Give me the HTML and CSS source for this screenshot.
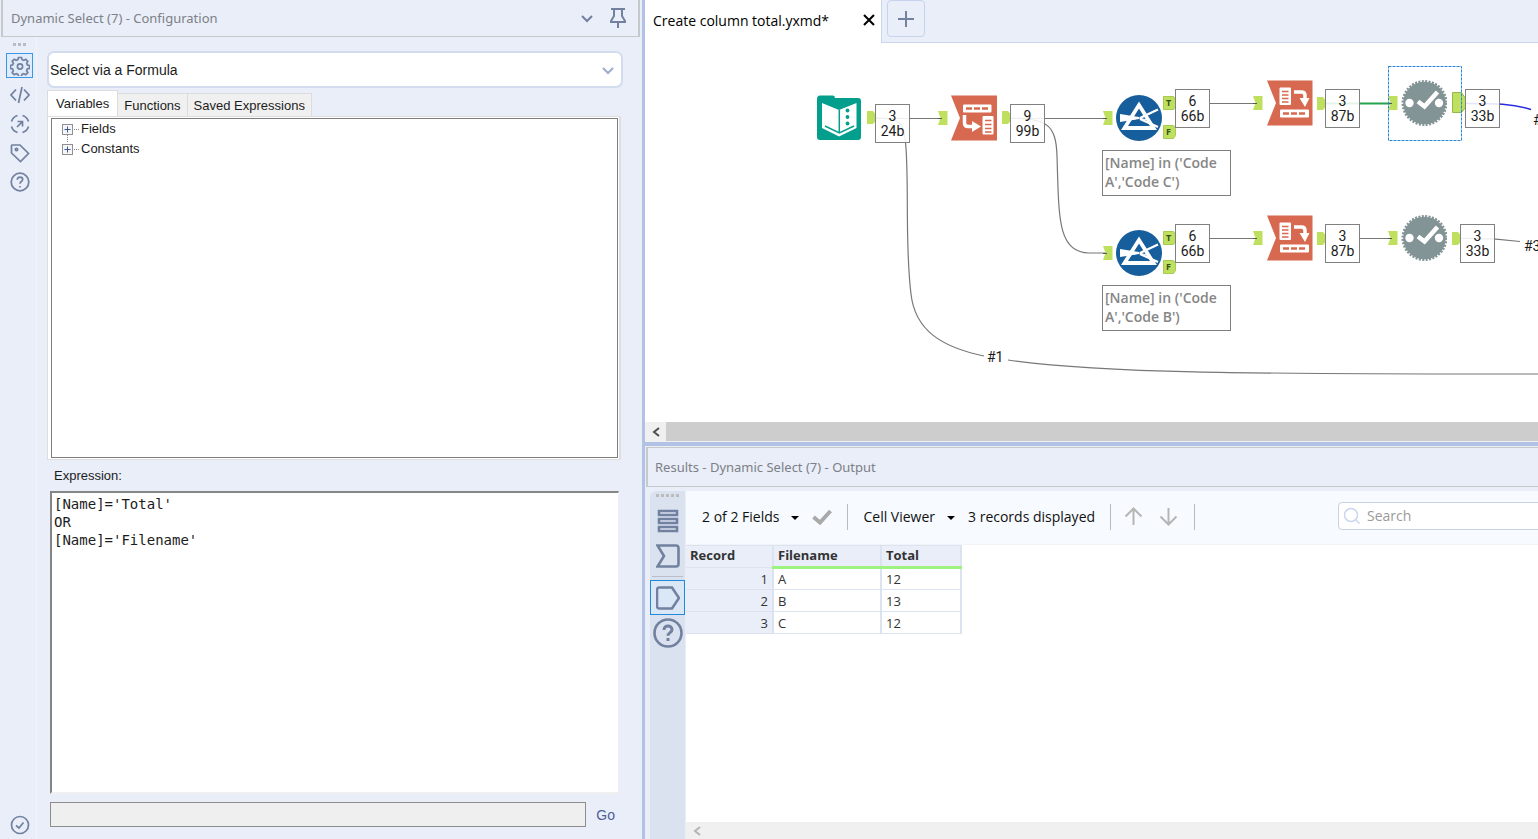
FILE: index.html
```html
<!DOCTYPE html>
<html lang="en">
<head>
<meta charset="utf-8">
<title>Create column total.yxmd</title>
<link rel="stylesheet" href="styles.css">
</head>
<body>
<div class="app">
  <section class="config">
    <header class="pane-head">
      <h2>Dynamic Select (7) - Configuration</h2>
      <button class="icon-btn" aria-label="Pane menu"><svg width="14" height="14" viewBox="0 0 14 14" class="line"><path d="M2 5l5 5 5-5"/></svg></button>
      <button class="icon-btn" aria-label="Pin pane"><svg width="18" height="22" viewBox="0 0 18 22" class="line"><path d="M2 2h14M5 2v7l-3 5v1h14v-1l-3-5V2M9 15v6"/></svg></button>
    </header>
    <div class="config-main">
      <nav class="rail">
        <span class="grip"><i></i><i></i><i></i></span>
        <button class="rail-btn on" aria-label="Configuration"><svg width="20" height="20" viewBox="0 0 20 20" class="line"><path d="M8.500 1.500h3l.6 2.200 1.700.7 2-1.100 2 2-1.100 2 .7 1.700 2.100.5v2.900l-2.200.6-.7 1.700 1.200 2-2.100 2-2-1.100-1.700.7-.6 2.200h-2.900l-.6-2.200-1.700-.7-2 1.100-2-2 1.100-2-.7-1.700-2.100-.6V9.500l2.200-.6.7-1.700-1.200-2 2-2 2 1.100 1.700-.7z"/><circle cx="10" cy="10.500" r="2.600"/></svg></button>
        <button class="rail-btn" aria-label="XML view"><svg width="20" height="20" viewBox="0 0 20 20" class="line"><path d="M6 4.500L1 10l5 5.500M14 4.500l5 5.500-5 5.500M12 2L8.500 18"/></svg></button>
        <button class="rail-btn" aria-label="Navigation"><svg width="20" height="20" viewBox="0 0 20 20" class="line"><path d="M12.500 1.500a9 9 0 0 1 6 6M18.500 12.500a9 9 0 0 1-6 6M7.500 18.500a9 9 0 0 1-6-6M1.500 7.500a9 9 0 0 1 6-6M7.500 7.500h5v5M12.500 7.500l-5.500 5.500"/></svg></button>
        <button class="rail-btn" aria-label="Annotation"><svg width="20" height="20" viewBox="0 0 20 20" class="line"><path d="M1.500 2.500v7.500l9 8.500 8-8-8.500-8.500h-8z"/><circle cx="6.500" cy="6.500" r="1.200"/></svg></button>
        <button class="rail-btn" aria-label="Help"><svg width="20" height="20" viewBox="0 0 20 20" class="line"><circle cx="10" cy="10" r="8.800"/><path d="M7.300 7.800c0-3.600 5.400-3.400 5.400-.2 0 2-2.700 1.900-2.700 4.100M10 14v1.400"/></svg></button>
        <button class="rail-btn last" aria-label="Status"><svg width="20" height="20" viewBox="0 0 20 20" class="line"><circle cx="10" cy="10" r="8.500"/><path d="M6 10.500l3 2.500 4.500-5.500"/></svg></button>
      </nav>
      <div class="form">
        <div class="combo">
          <select aria-label="Selection mode"><option>Select via a Formula</option></select>
          <svg width="12" height="12" viewBox="0 0 12 12" class="line pale"><path d="M1 4l5 5 5-5"/></svg>
        </div>
        <div class="tabs" role="tablist">
          <button class="tab on" role="tab" aria-selected="true">Variables</button>
          <button class="tab" role="tab">Functions</button>
          <button class="tab" role="tab">Saved Expressions</button>
        </div>
        <div class="tab-page">
          <ul class="tree">
            <li><svg width="20" height="20" viewBox="0 0 20 20"><use href="#plus"/><path class="dots" d="M6.500 16v4"/></svg>Fields</li>
            <li><svg width="20" height="20" viewBox="0 0 20 20"><use href="#plus"/><path class="dots" d="M6.500 0v4"/></svg>Constants</li>
          </ul>
        </div>
        <label class="expr-label" for="expr">Expression:</label>
        <textarea id="expr" class="expr" spellcheck="false">[Name]='Total'
OR
[Name]='Filename'</textarea>
        <div class="run"><input type="text" readonly aria-label="Expression result"><button>Go</button></div>
      </div>
    </div>
  </section>

  <main class="work">
    <section class="editor">
      <div class="docs">
        <div class="doc"><span>Create column total.yxmd*</span><button aria-label="Close tab"><svg width="12" height="12" viewBox="0 0 12 12"><path d="M1 1l10 10M11 1L1 11" stroke="#000" stroke-width="2"/></svg></button></div>
        <div class="docs-rest"><button class="new-doc" aria-label="New workflow"><svg width="16" height="16" viewBox="0 0 16 16" class="line"><path d="M8 0v16M0 8h16"/></svg></button></div>
      </div>
      <div class="canvas">
        <svg class="wires" aria-hidden="true">
          <g transform="translate(-645 -43)">
            <g class="wire">
              <path d="M875 118.500h66M1010 118.500h96M1209 103.500h47M1209 238.500h47M1359 238.500h33"/>
              <path d="M875 118c26 0 29 4 31 30 3 45-1 98 5 146 4 36 30 53 73 62M1008 360c90 13 230 14 530 14"/>
              <path d="M1010 118c37 1 46 6 47 38 2 60 0 97 32 97h18M1460 238.500c30-1 45 1 60 3"/>
            </g>
            <path class="wire green" d="M1325 103.500h67"/>
            <path class="wire blue" d="M1465 103.500c30 0 48 0 66 6"/>
            <use href="#out" x="867" y="110"/><use href="#out" x="1002" y="110"/>
            <use href="#out" x="1317" y="96"/><use href="#out" x="1317" y="231"/><use href="#out" x="1452" y="231"/>
            <use href="#in" x="938" y="111"/><use href="#in" x="1103" y="111"/><use href="#in" x="1103" y="246"/>
            <use href="#in" x="1253" y="96"/><use href="#in" x="1253" y="231"/><use href="#in" x="1388" y="96"/><use href="#in" x="1388" y="231"/>
            <use href="#tf" x="1163" y="96"/><use href="#tf" x="1163" y="125"/><use href="#tf" x="1163" y="231"/><use href="#tf" x="1163" y="260"/>
            <path d="M1452.500 92.500h9l4 6v9l-4 5h-9z" fill="#bfe05f" stroke="#93b84e"/>
            <g class="tf-text"><text x="1166" y="106">T</text><text x="1166" y="135">F</text><text x="1166" y="241">T</text><text x="1166" y="270">F</text></g>
            <rect class="picked" x="1388.500" y="66.500" width="73" height="74"/>
            <use href="#t-input" x="816" y="95" width="46" height="46"/>
            <use href="#t-transpose" x="951" y="95" width="46" height="46"/>
            <use href="#t-filter" x="1116" y="95" width="46" height="46"/><use href="#t-filter" x="1116" y="230" width="46" height="46"/>
            <use href="#t-crosstab" x="1267" y="80" width="46" height="46"/><use href="#t-crosstab" x="1267" y="215" width="46" height="46"/>
            <use href="#t-select" x="1401" y="80" width="46" height="46"/><use href="#t-select" x="1401" y="215" width="46" height="46"/>
          </g>
        </svg>
        <div class="count c1">3<br>24b</div>
        <div class="count c2">9<br>99b</div>
        <div class="count c3">6<br>66b</div>
        <div class="count c4">3<br>87b</div>
        <div class="count c5">3<br>33b</div>
        <div class="count c6">6<br>66b</div>
        <div class="count c7">3<br>87b</div>
        <div class="count c8">3<br>33b</div>
        <p class="note n1">[Name] in ('Code A','Code C')</p>
        <p class="note n2">[Name] in ('Code A','Code B')</p>
        <span class="tag g1">#1</span><span class="tag g2">#2</span><span class="tag g3">#3</span>
      </div>
      <div class="scroll"><button aria-label="Scroll left"><svg width="8" height="10" viewBox="0 0 8 10"><path d="M7 1L2 5l5 4" fill="none" stroke="#505050" stroke-width="2"/></svg></button><div class="thumb"></div></div>
    </section>

    <section class="results">
      <header class="pane-head"><h2>Results - Dynamic Select (7) - Output</h2></header>
      <div class="results-main">
        <nav class="side">
          <span class="grip"><i></i><i></i><i></i><i></i><i></i></span>
          <button class="side-btn" aria-label="Messages"><svg width="22" height="24" viewBox="0 0 22 24" class="line"><path d="M2 2h18v4H2zM2 10h18v4H2zM2 18h18v4H2z"/></svg></button>
          <button class="side-btn" aria-label="Input anchor"><svg width="24" height="24" viewBox="0 0 24 24" class="line"><path d="M1.500 1.500H20q2.500 0 2.500 2.500v16q0 2.500-2.500 2.500H1.500L8 12z"/></svg></button>
          <hr>
          <button class="side-btn on" aria-label="Output anchor"><svg width="24" height="24" viewBox="0 0 24 24" class="line"><path d="M3.500 1.500H16L23 12l-7 10.500H3.500q-2.500 0-2.500-2.500V4q0-2.500 2.500-2.500z"/></svg></button>
          <button class="side-btn" aria-label="Help"><svg width="30" height="30" viewBox="0 0 30 30" class="line"><circle cx="15" cy="15" r="13.500"/><path stroke-width="3" d="M11 12c0-5.500 8-5 8-.3 0 3-4 2.800-4 6M15 20v3"/></svg></button>
        </nav>
        <div class="data">
          <div class="toolbar">
            <button class="drop">2 of 2 Fields<i class="caret"></i></button>
            <button class="icon-btn apply" aria-label="Apply"><svg width="20" height="16" viewBox="0 0 20 16"><path d="M1.500 8l6.500 5.500L18.500 2" fill="none" stroke="#a9a9a9" stroke-width="4"/></svg></button>
            <i class="sep"></i>
            <button class="drop viewer">Cell Viewer<i class="caret"></i></button>
            <span class="shown">3 records displayed</span>
            <i class="sep"></i>
            <button class="icon-btn move" aria-label="Previous"><svg width="19" height="19" viewBox="0 0 19 19" class="arrow"><path d="M9.500 18V2M1.500 9.500l8-8 8 8"/></svg></button>
            <button class="icon-btn move" aria-label="Next"><svg width="19" height="19" viewBox="0 0 19 19" class="arrow"><path d="M9.500 1v16M1.500 9.500l8 8 8-8"/></svg></button>
            <i class="sep"></i>
            <label class="search"><svg width="18" height="18" viewBox="0 0 18 18"><g fill="none" stroke="#cbd6ec" stroke-width="1.500"><circle cx="8" cy="8" r="6.500"/><path d="M13 13l3.500 3.500"/></g></svg><input type="text" placeholder="Search" aria-label="Search"></label>
          </div>
          <table>
            <thead><tr><th class="rec">Record</th><th class="name">Filename</th><th class="total">Total</th></tr></thead>
            <tbody>
              <tr><td>1</td><td>A</td><td>12</td></tr>
              <tr><td>2</td><td>B</td><td>13</td></tr>
              <tr><td>3</td><td>C</td><td>12</td></tr>
            </tbody>
          </table>
          <div class="scroll low"><button aria-label="Scroll left"><svg width="8" height="10" viewBox="0 0 8 10"><path d="M7 1L2 5l5 4" fill="none" stroke="#b4b4b4" stroke-width="2"/></svg></button></div>
        </div>
      </div>
    </section>
  </main>
</div>

<svg class="defs" aria-hidden="true">
  <symbol id="plus" viewBox="0 0 20 20" width="20" height="20"><rect x="1.500" y="5.500" width="10" height="10" fill="#f6f6f6" stroke="#909090"/><path d="M3.500 10.500h6M6.500 7.500v6" stroke="#3b57a0"/><path d="M13 10.500h5" stroke="#888" stroke-dasharray="1 1"/></symbol>
  <symbol id="out" viewBox="0 0 9 15" width="9" height="15"><path d="M0 1h6l2 2.500v8L6 14H0z" fill="#bfe05f"/></symbol>
  <symbol id="in" viewBox="0 0 10 15" width="10" height="15"><path d="M0 0h9.500v14H0l2.500-7z" fill="#bfe05f"/><path d="M0 7.500h4" stroke="#555"/></symbol>
  <symbol id="tf" viewBox="0 0 14 15" width="14" height="15"><path d="M.5.500h10l2 3v7l-2 3H.5z" fill="#bfe05f" stroke="#a5cb50"/></symbol>
  <symbol id="t-input" viewBox="0 0 46 46"><path d="M4 .5h13q2 0 2 2.500h23q3 0 3 3v36q0 3-3 3H4q-3 0-3-3v-38q0-3.500 3-3.500z" fill="#049f8c"/><path d="M6 8l17 7 17.500-7v25L23 41.500 6 33z" fill="#fff"/><path d="M23.300 15v22M9 31l14.300 7L38 31" fill="none" stroke="#049f8c" stroke-width="1.500"/><g fill="#049f8c"><circle cx="31.500" cy="15.500" r="1.900"/><circle cx="31.500" cy="22" r="1.900"/><circle cx="31.500" cy="28.500" r="1.900"/></g></symbol>
  <symbol id="t-transpose" viewBox="0 0 46 46"><path d="M0 .5h46v45H0l9-22.500z" fill="#d6694f"/><rect x="12" y="9.500" width="28.500" height="8" rx="1" fill="#fff"/><path d="M15 13.500h23" stroke="#d6694f" stroke-width="2.600" stroke-dasharray="6 2"/><path d="M13.500 20v8q0 3.500 3.500 3.500h6" fill="none" stroke="#fff" stroke-width="3.500"/><path d="M21 26l9 5.500-9 5.500z" fill="#fff"/><rect x="31.500" y="21" width="11" height="18.500" rx="1" fill="#fff"/><path d="M34 25.500h6.500M34 29.500h6.500M34 33.500h6.500M34 37h6.500" stroke="#d6694f" stroke-width="1.600"/></symbol>
  <symbol id="t-crosstab" viewBox="0 0 46 46"><path d="M0 .5h45.500v45H0L9 23z" fill="#d6694f"/><rect x="12.500" y="7.500" width="11.500" height="17.500" rx="1" fill="#fff"/><path d="M15 11.500h6.500M15 15h6.500M15 18.500h6.500M15 22h6.500" stroke="#d6694f" stroke-width="1.600"/><path d="M27 12h7.500q3.500 0 3.500 3.500V20" fill="none" stroke="#fff" stroke-width="3.500"/><path d="M32.500 18h10L38 27z" fill="#fff"/><rect x="13" y="29.500" width="29" height="8" rx="1" fill="#fff"/><path d="M16 33.500h23" stroke="#d6694f" stroke-width="2.600" stroke-dasharray="6 2"/></symbol>
  <symbol id="t-filter" viewBox="0 0 46 46"><circle cx="23" cy="23" r="23" fill="#175e9c"/><path d="M4 19l19 3v2L4 27z" fill="#fff"/><path d="M24 23l18-8.500M24 24l18 8" stroke="#fff" stroke-width="2.300"/><path d="M23 10L8.500 33h29z" fill="none" stroke="#fff" stroke-width="3.800"/><path d="M14 25l9-2 8 2" fill="none" stroke="#fff"/></symbol>
  <symbol id="t-select" viewBox="0 0 46 46"><circle cx="23.500" cy="23" r="21.300" fill="#839496"/><circle cx="23.500" cy="23" r="21.500" fill="none" stroke="#839496" stroke-width="3" stroke-dasharray="2 1.378"/><circle cx="8.500" cy="23" r="4.200" fill="#fff"/><circle cx="38" cy="23" r="4.200" fill="#fff"/><path d="M17 21.500l6.500 5L36.500 12" fill="none" stroke="#fff" stroke-width="4.500"/></symbol>
</svg>
</body>
</html>
```
FILE: styles.css
```css
* { box-sizing: border-box; }
body { margin: 0; font-family: "Open Sans", "Noto Sans", sans-serif; font-size: 14px; color: #1c1c1c; }
button { border: 0; padding: 0; background: none; font: inherit; color: inherit; }
svg { display: block; flex: none; }
.defs { position: absolute; width: 0; height: 0; }
.line { fill: none; stroke: #71819f; stroke-width: 2; }
.pale { stroke: #9cadcb; }
.arrow { fill: none; stroke: #b5b5b5; stroke-width: 2; }

.app { display: flex; height: 100vh; overflow: hidden; background: #e9eef9; }

.pane-head { display: flex; align-items: center; gap: 20px; flex: none; border: 1px solid #c6c8cb; border-width: 1px 2px; padding: 0 11px 0 8px; color: #7d8086; }
.pane-head h2 { flex: 1; margin: 0; font: 400 13px/18px "Noto Sans", sans-serif; }
.icon-btn { display: flex; }

.config { display: flex; flex-direction: column; flex: 0 0 645px; min-width: 0; border-right: 3px solid #b1c2e5; }
.config > .pane-head { height: 37px; margin: 0 2px 0 1px; border-top: 0; gap: 15px; }
.config-main { display: flex; flex: 1; min-height: 0; }
.rail { display: flex; flex-direction: column; align-items: center; width: 37px; padding: 6px 0 2px 3px; border-right: 1px solid #f0f3fb; }
.grip { display: flex; gap: 2px; height: 10px; }
.grip i { width: 3px; height: 3px; background: #b9bcc2; }
.rail-btn { display: grid; place-items: center; width: 27px; height: 25px; margin-bottom: 4px; }
.rail-btn svg { stroke-width: 1.7; }
.rail-btn.on { border: 1px solid #3a97e3; background: #e0ebfb; }
.rail-btn.last { margin: auto 0 0; }

.form { display: flex; flex-direction: column; flex: 1; min-width: 0; padding: 14px 21px 12px 10px; font: 13px "Liberation Sans", Arial, sans-serif; }
.combo { display: flex; align-items: center; height: 37px; margin-right: -2px; padding-right: 7px; border: 2px solid #d3dcee; border-radius: 7px; background: #fff; }
.combo select { flex: 1; height: 100%; border: 0; padding: 0 1px; appearance: none; background: none; font: 14px "Liberation Sans", Arial, sans-serif; color: #1c1c1c; }
.tabs { display: flex; align-items: flex-end; height: 28px; }
.tab { height: 23px; padding: 0 6px; border: 1px solid #dcdcdc; border-left-width: 0; border-bottom: 0; background: #f0f0f0; white-space: nowrap; }
.tab.on { height: 26px; padding: 0 8px 1px; border-left-width: 1px; background: #fff; }
.tab-page { display: flex; flex: 337 1 0; padding: 1px; border: 1px solid #dedede; border-right-width: 2px; background: #fff; }
.tree { flex: 1; margin: 0 0 0 2px; padding: 0 0 0 9px; border: 1px solid #7d7d7d; list-style: none; }
.tree li { display: flex; line-height: 20px; }
.dots { stroke: #888; stroke-dasharray: 1 1; }
.expr-label { padding: 8px 0 7px 7px; line-height: 16px; }
.expr { flex: 293 1 0; margin: 0 2px 0 3px; padding: 2px; border: 2px solid #858585; border-right: 1px solid #f0f0f0; border-bottom-color: #f0f0f0; border-radius: 0; outline: 0; resize: none; background: #fff; color: #1c1c1c; font: 14px/18px "DejaVu Sans Mono", monospace; }
.run { display: flex; gap: 10px; margin: 8px 6px 0 3px; font-size: 14px; }
.run input { flex: 1; min-width: 0; height: 25px; border: 1px solid #8d8d8d; background: #efefef; }
.run button { color: #4c6097; }

.work { display: flex; flex-direction: column; flex: 1; min-width: 0; }
.editor { display: flex; flex-direction: column; flex: 442 1 0; min-height: 0; border-bottom: 4px solid #b1c2e5; background: #fff; }
.docs { display: flex; height: 43px; flex: none; }
.doc { display: flex; align-items: center; gap: 34px; padding: 0 6px 3px 8px; color: #000; }
.docs-rest { flex: 1; padding: 0 5px; border: 1px solid #cbd6ec; border-width: 0 0 1px 1px; background: #e9eef9; }
.new-doc { display: grid; place-items: center; width: 38px; height: 37px; border: 1px solid #c6d3ec; border-radius: 4px; }
.canvas { position: relative; flex: 1; overflow: hidden; }
.wires { position: absolute; inset: 0; width: 100%; height: 100%; }
.wire { fill: none; stroke: #777; stroke-width: 1.2; }
.green { stroke: #26a24c; stroke-width: 2; }
.blue { stroke: #2a2ae0; stroke-width: 1.6; }
.picked { fill: none; stroke: #2485d8; stroke-dasharray: 3 1; }
.tf-text { font: bold 9px "Open Sans", sans-serif; fill: #34501a; }
.count { position: absolute; width: 35px; height: 39px; padding-top: 4px; border: 1px solid #808080; background: rgba(255, 255, 255, .88); font: 14px/15px Roboto, sans-serif; text-align: center; }
.c1 { left: 230px; top: 61px; }
.c2 { left: 365px; top: 61px; }
.c3 { left: 530px; top: 46px; }
.c4 { left: 680px; top: 46px; }
.c5 { left: 820px; top: 46px; }
.c6 { left: 530px; top: 181px; }
.c7 { left: 680px; top: 181px; }
.c8 { left: 815px; top: 181px; }
.note { position: absolute; left: 457px; width: 129px; height: 46px; margin: 0; padding: 2px; border: 1px solid #7e7e7e; font-weight: 600; line-height: 19px; color: #868686; }
.n1 { top: 107px; }
.n2 { top: 242px; }
.tag { position: absolute; font: 14px/16px Roboto, sans-serif; }
.g1 { left: 342px; top: 306px; }
.g2 { left: 888px; top: 69px; }
.g3 { left: 879px; top: 195px; }
.scroll { display: flex; height: 20px; flex: none; background: #f0f0f0; }
.scroll button { display: grid; place-items: center; width: 21px; }
.thumb { flex: 1; margin: 0 0 1px; background: #cdcdcd; }

.results { display: flex; flex-direction: column; flex: 393 1 0; min-height: 0; padding-left: 1px; }
.results > .pane-head { height: 40px; margin-top: 1px; border-right: 0; padding-left: 7px; }
.results-main { display: flex; flex: 1; min-height: 0; padding: 4px 0 0 4px; }
.side { display: flex; flex-direction: column; align-items: center; width: 35px; border-radius: 6px 0 0; background: #dbe2ef; }
.side .grip { height: 12px; padding-top: 3px; }
.side .grip i { background: #bbb; }
.side-btn { display: grid; place-items: center; width: 35px; height: 35px; }
.side-btn svg { stroke-width: 2.600; }
.side-btn.on { border: 1px solid #2089dc; background: #dae7f7; }
.side hr { width: 31px; margin: 3px 0 3px; border: 0; border-top: 1px solid #b9bec8; }
.data { display: flex; flex-direction: column; flex: 1; min-width: 0; margin-left: 1px; background: #fff; }
.toolbar { display: flex; align-items: center; height: 54px; flex: none; padding: 0 0 2px 16px; background: #f7faff; border-bottom: 1px solid #f1f3f6; white-space: nowrap; color: #111; }
.caret { display: inline-block; margin: 0 0 2px 12px; border: 4px solid transparent; border-top-color: #000; border-bottom: 0; }
.apply { margin: 0 15px 0 13px; }
.sep { width: 1px; height: 26px; background: #b8bcc2; }
.viewer { margin: 0 13px 0 15px; }
.shown { margin-right: 15px; }
.move { margin-left: 13px; }
.move + .move { margin: 0 16px; }
.search { display: flex; align-items: center; gap: 6px; width: 320px; flex: none; height: 28px; margin: 0 -120px 2px auto; padding-left: 4px; border: 1px solid #c6d2ea; border-radius: 4px; background: #fff; }
.search input { width: 100%; border: 0; padding: 0; outline: 0; background: none; font: inherit; }
.search input::placeholder { color: #9a9a9a; opacity: 1; }
table { width: 276px; border-collapse: collapse; table-layout: fixed; font-size: 13px; color: #333; }
th, td { height: 22px; padding: 0 4px; border: 1px solid #dbe3f1; border-right-width: 2px; border-left: 0; text-align: left; line-height: 18px; }
th { background: #e9eef9; font-size: 13px; font-weight: 700; vertical-align: top; }
.rec { width: 87px; }
.name { width: 108px; }
.name, .total { border-bottom: 3px solid #9cf37f; }
td:first-child { background: #e9eef9; text-align: right; }
.low { height: 17px; margin-top: auto; }
```
